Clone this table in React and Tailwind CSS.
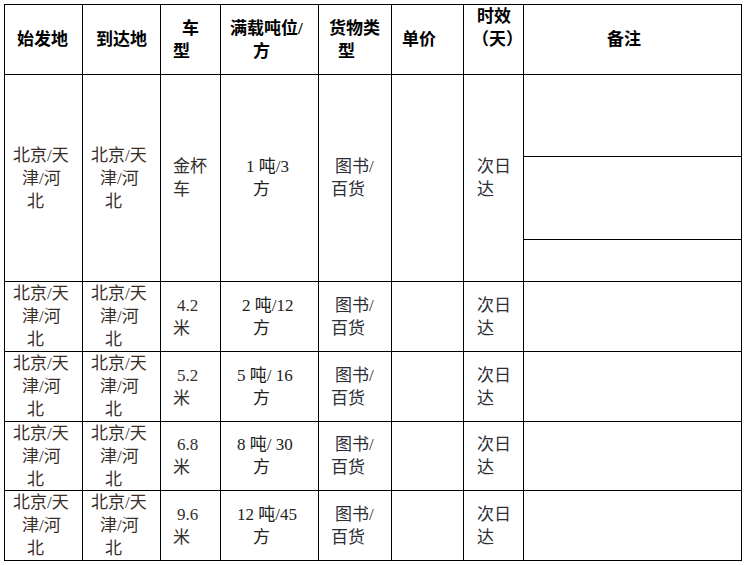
import React from "react"

// ink offsets (px from cell left) copied off the reference
const Lines = ({ lines, className = "" }) => (
    <div className={`flex flex-col justify-center h-full ${className}`}>
        {lines.map(([text, pl], i) => (
            <div key={i} className="h-[23px] leading-[23px] whitespace-nowrap" style={{ paddingLeft: pl }}>
                {text}
            </div>
        ))}
    </div>
)

const cell = "border-r border-b border-black overflow-hidden"

const place = [["北京/天", 8], ["津/河", 17], ["北", 22]]

const rows = [
    { truck: [["4.2", 16], ["米", 12]], load: [["2 吨/12", 21], ["方", 32]] },
    { truck: [["5.2", 16], ["米", 12]], load: [["5 吨/ 16", 16], ["方", 32]] },
    { truck: [["6.8", 16], ["米", 12]], load: [["8 吨/ 30", 16], ["方", 32]] },
    { truck: [["9.6", 16], ["米", 12]], load: [["12 吨/45", 16], ["方", 32]] },
]

const App = () => {
    return (
        <div
            style={{ fontFamily: '"Liberation Serif", "Noto Sans CJK SC", serif' }}
            className="w-[746px] h-[566px] bg-white pl-[4px] pt-[4px] text-[17px]"
        >
            <div className="grid grid-cols-[78px_78px_60px_98px_73px_72px_60px_218px] grid-rows-[70px_82px_83px_42px_70px_70px_69px_70px] w-max border-l border-t border-black">

                {/* header */}
                <div className={`${cell} font-bold text-black`}><Lines lines={[["始发地", 12]]} /></div>
                <div className={`${cell} font-bold text-black`}><Lines lines={[["到达地", 13]]} /></div>
                <div className={`${cell} font-bold text-black`}><Lines lines={[["车", 21], ["型", 12]]} /></div>
                <div className={`${cell} font-bold text-black`}><Lines lines={[["满载吨位/", 9], ["方", 32]]} /></div>
                <div className={`${cell} font-bold text-black`}><Lines lines={[["货物类", 10], ["型", 19]]} /></div>
                <div className={`${cell} font-bold text-black`}><Lines lines={[["单价", 10]]} /></div>
                <div className={`${cell} font-bold text-black`}><Lines className="!justify-start" lines={[["时效", 13], ["（天）", 8]]} /></div>
                <div className={`${cell} font-bold text-black`}><Lines lines={[["备注", 83]]} /></div>

                {/* first row, remark split in three */}
                <div className={`${cell} row-span-3 text-[#3a2e28]`}><Lines lines={place} /></div>
                <div className={`${cell} row-span-3 text-[#3a2e28]`}><Lines lines={place} /></div>
                <div className={`${cell} row-span-3 text-[#33302c]`}><Lines lines={[["金杯", 12], ["车", 12]]} /></div>
                <div className={`${cell} row-span-3 text-[#222]`}><Lines lines={[["1 吨/3", 25], ["方", 32]]} /></div>
                <div className={`${cell} row-span-3 text-[#2e2e36]`}><Lines lines={[["图书/", 16], ["百货", 12]]} /></div>
                <div className={`${cell} row-span-3`}></div>
                <div className={`${cell} row-span-3 text-[#2e2e36]`}><Lines lines={[["次日", 13], ["达", 13]]} /></div>
                <div className={`${cell} col-start-8`}></div>
                <div className={`${cell} col-start-8`}></div>
                <div className={`${cell} col-start-8`}></div>

                {rows.map((r, i) => (
                    <React.Fragment key={i}>
                        <div className={`${cell} text-[#3a2e28]`}><Lines lines={place} /></div>
                        <div className={`${cell} text-[#3a2e28]`}><Lines lines={place} /></div>
                        <div className={`${cell} text-[#33302c]`}><Lines lines={r.truck} /></div>
                        <div className={`${cell} text-[#222]`}><Lines lines={r.load} /></div>
                        <div className={`${cell} text-[#2e2e36]`}><Lines lines={[["图书/", 16], ["百货", 12]]} /></div>
                        <div className={cell}></div>
                        <div className={`${cell} text-[#2e2e36]`}><Lines lines={[["次日", 13], ["达", 13]]} /></div>
                        <div className={cell}></div>
                    </React.Fragment>
                ))}
            </div>
        </div>
    )
}

export default App
